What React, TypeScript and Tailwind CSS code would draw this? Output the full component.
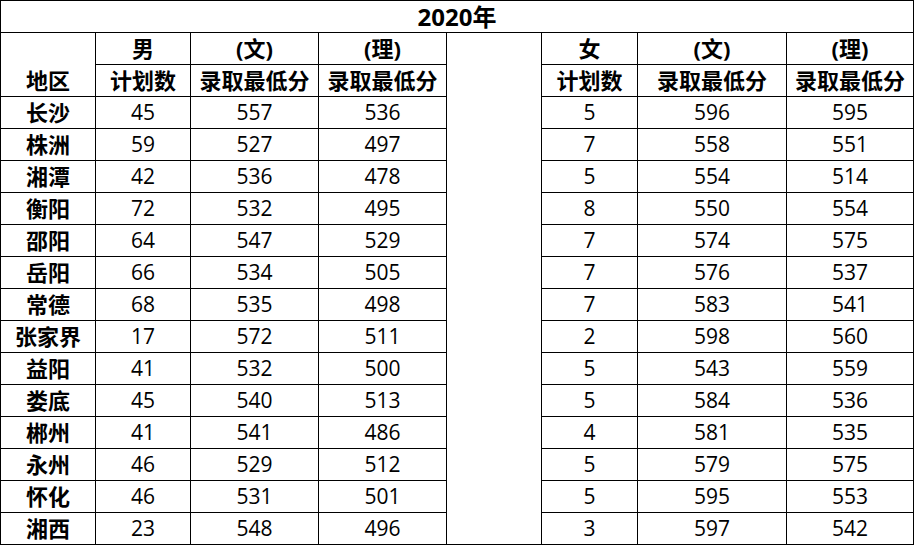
const rows: [string, string, string, string, string, string, string][] = [
  ["长沙", "45", "557", "536", "5", "596", "595"],
  ["株洲", "59", "527", "497", "7", "558", "551"],
  ["湘潭", "42", "536", "478", "5", "554", "514"],
  ["衡阳", "72", "532", "495", "8", "550", "554"],
  ["邵阳", "64", "547", "529", "7", "574", "575"],
  ["岳阳", "66", "534", "505", "7", "576", "537"],
  ["常德", "68", "535", "498", "7", "583", "541"],
  ["张家界", "17", "572", "511", "2", "598", "560"],
  ["益阳", "41", "532", "500", "5", "543", "559"],
  ["娄底", "45", "540", "513", "5", "584", "536"],
  ["郴州", "41", "541", "486", "4", "581", "535"],
  ["永州", "46", "529", "512", "5", "579", "575"],
  ["怀化", "46", "531", "501", "5", "595", "553"],
  ["湘西", "23", "548", "496", "3", "597", "542"],
];

const base = "border border-black p-0 h-[31px] text-center leading-[31px]";
const head = `${base} align-middle font-bold text-[22px]`;
const num = `${base} align-middle font-normal text-[21px]`;

export default function App() {
  return (
    <div className="w-[915px] h-[545px] bg-white text-black font-['Open_Sans','Noto_Sans_CJK_SC',sans-serif]">
      <table className="table-fixed border-collapse w-[913px]">
        <colgroup>
          <col className="w-[95px]" />
          <col className="w-[95px]" />
          <col className="w-[128px]" />
          <col className="w-[128px]" />
          <col className="w-[95px]" />
          <col className="w-[96px]" />
          <col className="w-[149px]" />
          <col className="w-[127px]" />
        </colgroup>
        <tbody>
          <tr>
            <th colSpan={8} className={`${base} align-middle font-bold text-[24px]`}>
              2020年
            </th>
          </tr>
          <tr>
            <th rowSpan={2} className={`${base} align-bottom font-bold text-[22px]`}>
              地区
            </th>
            <th className={head}>男</th>
            <th className={head}>(文)</th>
            <th className={head}>(理)</th>
            <td rowSpan={16} className="border border-black p-0" />
            <th className={head}>女</th>
            <th className={head}>(文)</th>
            <th className={head}>(理)</th>
          </tr>
          <tr>
            <th className={head}>计划数</th>
            <th className={head}>录取最低分</th>
            <th className={head}>录取最低分</th>
            <th className={head}>计划数</th>
            <th className={head}>录取最低分</th>
            <th className={head}>录取最低分</th>
          </tr>
          {rows.map((r) => (
            <tr key={r[0]}>
              <td className={head}>{r[0]}</td>
              <td className={num}>{r[1]}</td>
              <td className={num}>{r[2]}</td>
              <td className={num}>{r[3]}</td>
              <td className={num}>{r[4]}</td>
              <td className={num}>{r[5]}</td>
              <td className={num}>{r[6]}</td>
            </tr>
          ))}
        </tbody>
      </table>
    </div>
  );
}
